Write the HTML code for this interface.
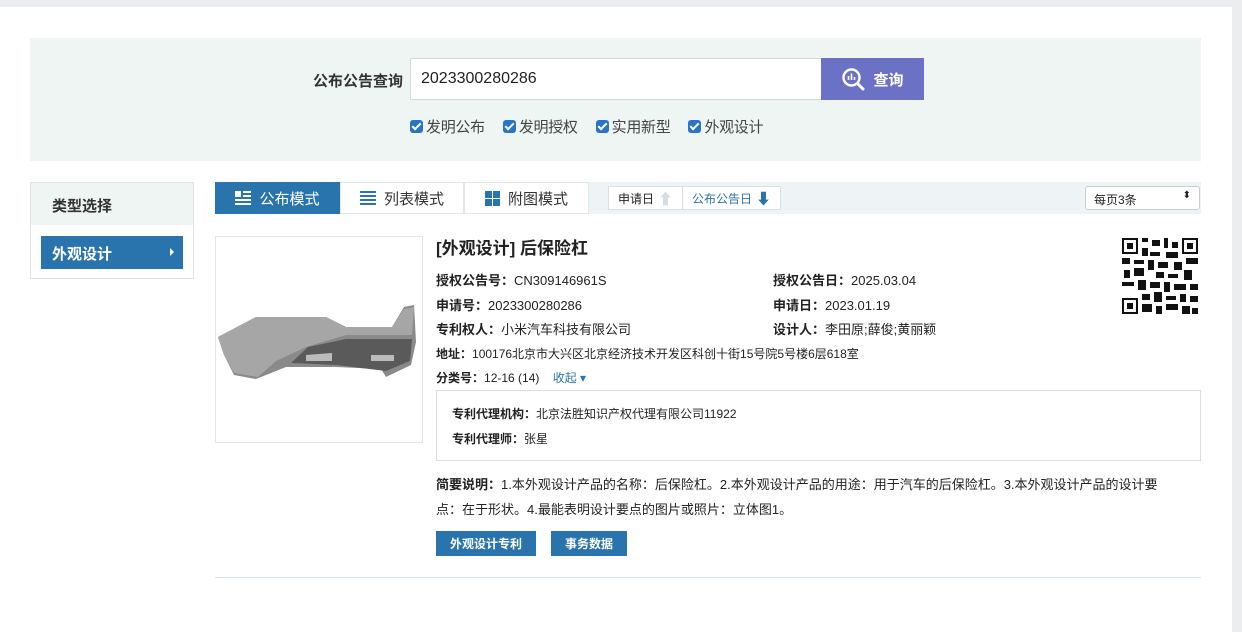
<!DOCTYPE html>
<html><head><meta charset="utf-8"><style>
*{box-sizing:border-box;margin:0;padding:0}
body{width:1242px;height:632px;overflow:hidden;background:#fff;font-family:"Liberation Sans","Noto Sans CJK SC",sans-serif;color:#222;position:relative}
.abs{position:absolute;white-space:nowrap}
.topbar{left:0;top:0;width:1242px;height:7px;background:#ebedef}
.rbar{left:1232px;top:0;width:10px;height:632px;background:#ebedef}
.search{left:30px;top:38px;width:1171px;height:123px;background:#eef5f2}
.lbl{left:313px;top:70px;font-size:15px;font-weight:bold;color:#333}
.inp{left:410px;top:58px;width:412px;height:42px;background:#fff;border:1px solid #d6d9d9;font-size:16px;padding:11px 10px;color:#222}
.btn{left:821px;top:58px;width:103px;height:42px;background:#6b72c5;color:#fff;font-size:15px;font-weight:bold;display:flex;align-items:center;justify-content:center;gap:8px}
.cbs{left:410px;top:116px;font-size:15px;color:#444;display:flex;gap:18px;letter-spacing:-0.3px}
.cb{display:flex;align-items:center;gap:3px}
.cb i{display:inline-block;width:13px;height:13px;background:#2a74c8;border-radius:3px;position:relative}
.cb i:after{content:"";position:absolute;left:4px;top:1px;width:3px;height:7px;border:solid #fff;border-width:0 2px 2px 0;transform:rotate(45deg)}
.side{left:30px;top:182px;width:164px;height:97px;border:1px solid #dfe5e5;background:#fff}
.side .h{height:42px;background:#eef5f2;font-size:15px;font-weight:bold;padding:12px 21px;color:#333}
.side .a{position:absolute;left:10px;top:53px;width:142px;height:33px;background:#2a74ad;color:#fff;font-size:15px;font-weight:bold;padding:7px 11px}
.side .a:after{content:"";position:absolute;right:9px;top:12px;border-left:4px solid #fff;border-top:4px solid transparent;border-bottom:4px solid transparent}
.tabs{left:215px;top:182px;width:986px;height:32px;background:#eef3f5}
.tab{position:absolute;top:0;height:32px;font-size:15px;display:flex;align-items:center;justify-content:center;gap:8px;background:#fff;border:1px solid #e3e6e8;color:#333;white-space:nowrap}
.sort{position:absolute;top:4px;height:24px;font-size:12px;background:#fff;border:1px solid #dcdfe2;display:flex;align-items:center;justify-content:center;gap:4px;white-space:nowrap}
.sel{position:absolute;left:870px;top:4px;width:115px;height:24px;background:#fff;border:1px solid #ccc;border-radius:3px;font-size:12px;padding:4px 8px}
.img{left:215px;top:236px;width:208px;height:207px;border:1px solid #e3e6e8}
.t{left:436px;top:234px;font-size:17px;font-weight:bold;color:#222}
.f{font-size:13px;color:#222}
.f b{font-weight:bold}
.s{font-size:12px}
.agent{left:436px;top:390px;width:765px;height:71px;border:1px solid #d8e0e4}
.desc{left:436px;top:472px;width:745px;font-size:13px;line-height:25px;white-space:normal}
.bb{top:531px;height:25px;background:#2a74ad;color:#fff;font-size:12px;font-weight:bold;display:flex;align-items:center;justify-content:center}
.line{left:215px;top:577px;width:986px;height:1px;background:#d7e6ec}
</style></head><body>
<div class="abs topbar"></div><div class="abs rbar"></div>
<div class="abs search"></div>
<div class="abs lbl">公布公告查询</div>
<div class="abs inp">2023300280286</div>
<div class="abs btn"><svg width="24" height="24" viewBox="0 0 24 24"><circle cx="10.5" cy="10.5" r="8" fill="none" stroke="#fff" stroke-width="2.4"/><path d="M16.5 16.5L22 22" stroke="#fff" stroke-width="3" stroke-linecap="round"/><path d="M7.5 13V9M10.5 13V6.5M13.5 13V10" stroke="#fff" stroke-width="1.6"/></svg>查询</div>
<div class="abs cbs"><span class="cb"><i></i>发明公布</span><span class="cb"><i></i>发明授权</span><span class="cb"><i></i>实用新型</span><span class="cb"><i></i>外观设计</span></div>
<div class="abs side"><div class="h">类型选择</div><div class="a">外观设计</div></div>
<div class="abs tabs">
<div class="tab" style="left:0;width:125px;background:#2a74ad;color:#fff;border-color:#2a74ad"><svg width="16" height="14"><rect x="0" y="0" width="6" height="6" fill="#fff"/><rect x="8" y="0" width="8" height="2" fill="#fff"/><rect x="8" y="4" width="8" height="2" fill="#fff"/><rect x="0" y="8" width="16" height="2" fill="#fff"/><rect x="0" y="12" width="16" height="2" fill="#fff"/></svg>公布模式</div>
<div class="tab" style="left:125px;width:124px"><svg width="16" height="14"><rect y="0" width="16" height="2" fill="#2a74ad"/><rect y="4" width="16" height="2" fill="#2a74ad"/><rect y="8" width="16" height="2" fill="#2a74ad"/><rect y="12" width="16" height="2" fill="#2a74ad"/></svg>列表模式</div>
<div class="tab" style="left:249px;width:125px"><svg width="15" height="15"><rect width="7" height="7" fill="#2a74ad"/><rect x="8" width="7" height="7" fill="#2a74ad"/><rect y="8" width="7" height="7" fill="#2a74ad"/><rect x="8" y="8" width="7" height="7" fill="#2a74ad"/></svg>附图模式</div>
<div class="sort" style="left:393px;width:75px">申请日 <span style="color:#d5dde2;font-size:15px">⬆</span></div>
<div class="sort" style="left:467px;width:99px;color:#2a74ad">公布公告日 <span style="font-size:15px">⬇</span></div>
<div class="sel">每页3条<span style="position:absolute;right:8px;top:3px;font-size:10px">⬍</span></div>
</div>
<div class="abs img"><svg width="206" height="205" viewBox="0 0 206 205"><path d="M2 100L40 80L110 80L130 90L176 90L188 70L198 68L200 105L195 128L170 140L165 132L120 130L70 130L40 142L18 138L8 118Z" fill="#8a8a8a"/><path d="M2 100L40 80L110 80L130 90L176 90L188 72L198 70L196 98L130 98L90 110L60 124L42 140L18 136L8 118Z" fill="#a6a6a6"/><path d="M92 110L130 102L196 102L194 124L170 134L120 128L75 126Z" fill="#5a5a5a"/><path d="M90 118L116 116L116 124L90 124Z M155 118L178 118L178 124L155 124Z" fill="#bbb"/></svg></div>
<div class="abs t">[外观设计] 后保险杠</div>
<div class="abs f" style="left:436px;top:270px"><b>授权公告号：</b>CN309146961S</div>
<div class="abs f" style="left:773px;top:270px"><b>授权公告日：</b>2025.03.04</div>
<div class="abs f" style="left:436px;top:295px"><b>申请号：</b>2023300280286</div>
<div class="abs f" style="left:773px;top:295px"><b>申请日：</b>2023.01.19</div>
<div class="abs f" style="left:436px;top:319px"><b>专利权人：</b>小米汽车科技有限公司</div>
<div class="abs f" style="left:773px;top:319px"><b>设计人：</b>李田原;薛俊;黄丽颖</div>
<div class="abs f s" style="left:436px;top:345px"><b>地址：</b>100176北京市大兴区北京经济技术开发区科创十街15号院5号楼6层618室</div>
<div class="abs f s" style="left:436px;top:369px"><b>分类号：</b>12-16 (14) &nbsp;&nbsp;&nbsp;<span style="color:#2a74ad">收起 ▾</span></div>
<div class="abs agent"></div>
<div class="abs f s" style="left:452px;top:405px"><b>专利代理机构：</b>北京法胜知识产权代理有限公司11922</div>
<div class="abs f s" style="left:452px;top:430px"><b>专利代理师：</b>张星</div>
<div class="abs desc"><b>简要说明：</b>1.本外观设计产品的名称：后保险杠。2.本外观设计产品的用途：用于汽车的后保险杠。3.本外观设计产品的设计要点：在于形状。4.最能表明设计要点的图片或照片：立体图1。</div>
<div class="abs bb" style="left:436px;width:100px">外观设计专利</div>
<div class="abs bb" style="left:551px;width:76px">事务数据</div>
<div class="abs line"></div>
<div class="abs" style="left:1120px;top:236px;width:80px;height:80px"><svg width="80" height="80" viewBox="0 0 80 80"><rect width="80" height="80" fill="#fff"/><g fill="#111"><rect x="2" y="2" width="16" height="16"/><rect x="62" y="2" width="16" height="16"/><rect x="2" y="62" width="16" height="16"/></g><g fill="#fff"><rect x="4" y="4" width="12" height="12"/><rect x="64" y="4" width="12" height="12"/><rect x="4" y="64" width="12" height="12"/></g><g fill="#111"><rect x="7" y="7" width="6" height="6"/><rect x="67" y="7" width="6" height="6"/><rect x="7" y="67" width="6" height="6"/><path d="M22 2h6v4h-6zM32 4h8v6h-8zM44 2h4v10h-4zM52 6h6v6h-6zM22 12h6v8h-6zM30 16h10v4h-10zM46 16h12v6h-12zM2 22h8v6h-8zM14 24h10v4h-10zM28 24h6v10h-6zM38 26h10v6h-10zM54 26h8v8h-8zM66 22h12v6h-12zM4 34h6v8h-6zM14 32h10v8h-10zM36 36h8v6h-8zM48 38h10v4h-10zM64 34h8v10h-8zM2 46h12v4h-12zM18 44h8v10h-8zM30 46h10v6h-10zM44 46h6v10h-6zM54 48h12v6h-12zM70 48h8v6h-8zM22 58h8v6h-8zM34 56h8v10h-8zM46 60h10v4h-10zM60 58h6v8h-6zM70 60h8v6h-8zM22 68h10v8h-10zM36 70h6v8h-6zM46 68h12v6h-12zM62 70h8v8h-8zM72 72h6v6h-6z"/></g></svg></div>
</body></html>
